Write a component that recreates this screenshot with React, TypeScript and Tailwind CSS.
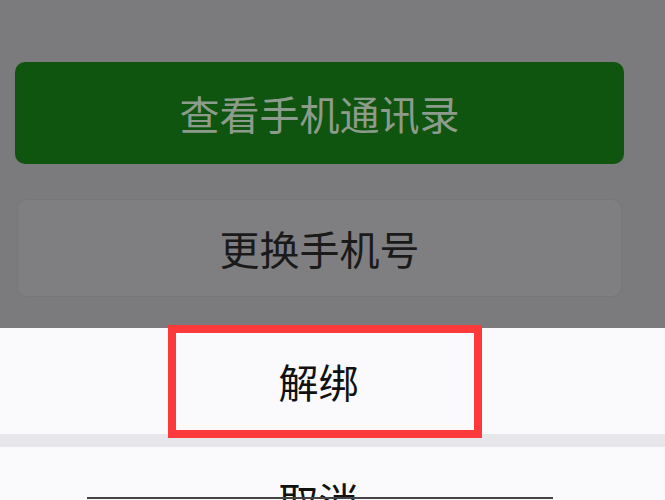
import React from "react";

export default function App() {
  const font = { fontFamily: '"Noto Sans CJK SC", "Noto Sans", sans-serif' };
  return (
    <div
      className="relative w-[665px] h-[500px] overflow-hidden bg-[#7b7b7d] flex flex-col"
      style={font}
    >
      <div className="h-[328px] shrink-0 flex flex-col pt-[62px] px-[15px] gap-[35px]">
        <div className="h-[102px] w-[609px] rounded-[10px] bg-[#0f5510] flex items-center justify-center text-[40px] leading-none text-[#8c9b8c]">
          查看手机通讯录
        </div>
        <div className="ml-[2px] h-[98px] w-[605px] rounded-[10px] bg-[#7f7f81] border border-[#777779] flex items-center justify-center text-[40px] leading-none text-[#1a1a1a]">
          更换手机号
        </div>
      </div>
      <div className="flex-1 flex flex-col bg-[#fafafc]">
        <div className="h-[106px] shrink-0 flex items-center justify-center pr-[28px] text-[40px] leading-none text-[#111111]">
          解绑
        </div>
        <div className="h-[13px] shrink-0 bg-[#e6e6eb]" />
        <div className="h-[106px] shrink-0 flex items-center justify-center pr-[28px] text-[40px] leading-none text-[#111111]">
          取消
        </div>
      </div>
      <div className="absolute left-[168px] top-[325px] w-[314px] h-[113px] border-[8px] border-[#fc3a3b]" />
      <div className="absolute left-[87px] top-[497px] w-[466px] h-[2px] bg-[#444444]" />
    </div>
  );
}
